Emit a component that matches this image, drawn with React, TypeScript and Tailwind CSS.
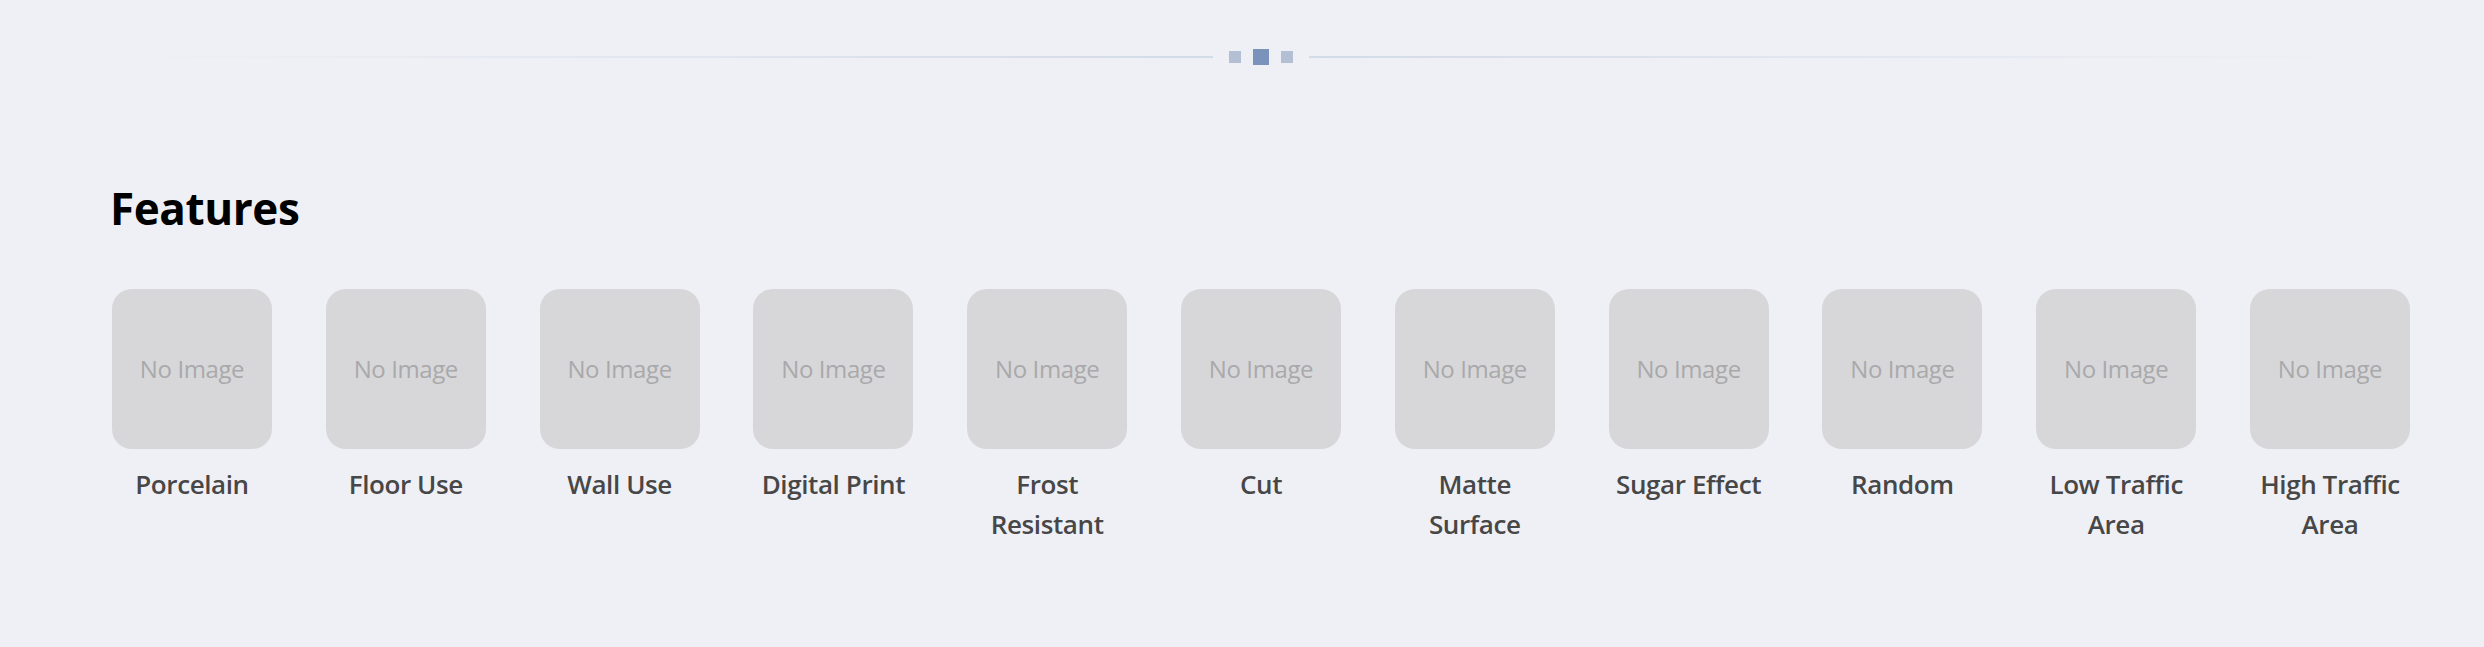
const features = [
  "Porcelain",
  "Floor Use",
  "Wall Use",
  "Digital Print",
  "Frost Resistant",
  "Cut",
  "Matte Surface",
  "Sugar Effect",
  "Random",
  "Low Traffic Area",
  "High Traffic Area",
];

const Divider = () => (
  <div className="flex items-center pl-[130px]">
    <div className="w-[1083px] h-[2px] bg-gradient-to-r from-transparent to-[#d3dbe8]"></div>
    <div className="flex items-center gap-[12px] mx-[16px]">
      <div className="w-[12px] h-[12px] bg-[#b3c0d4]"></div>
      <div className="w-[16px] h-[16px] bg-[#7a93bb]"></div>
      <div className="w-[12px] h-[12px] bg-[#b3c0d4]"></div>
    </div>
    <div className="w-[1041px] h-[2px] bg-gradient-to-r from-[#d3dbe8] to-transparent"></div>
  </div>
);

const App = () => {
  return (
    <div className="min-h-screen w-full bg-[#eff0f5] pt-[49px] font-['Open_Sans',sans-serif]">
      <Divider />

      {/* Features */}
      <section className="pl-[112px] pt-[117px]">
        <h2 className="-ml-[2px] text-[44px] leading-[52px] font-bold text-black tracking-[-0.4px]">Features</h2>
        <div className="flex gap-[53.8px] mt-[55px]">
          {features.map((f) => (
            <div key={f} className="w-[160px] flex flex-col items-center">
              <div className="w-[160px] h-[160px] rounded-[20px] bg-[#d7d7d9] flex items-center justify-center">
                <span className="text-[24px] text-[#a9a9ab] tracking-[-0.4px]">No Image</span>
              </div>
              <div className="mt-[15px] w-[160px] text-center text-[26px] leading-[40px] font-semibold text-[#474747] tracking-[-0.4px]">
                {f}
              </div>
            </div>
          ))}
        </div>
      </section>
    </div>
  );
};

export default App;
